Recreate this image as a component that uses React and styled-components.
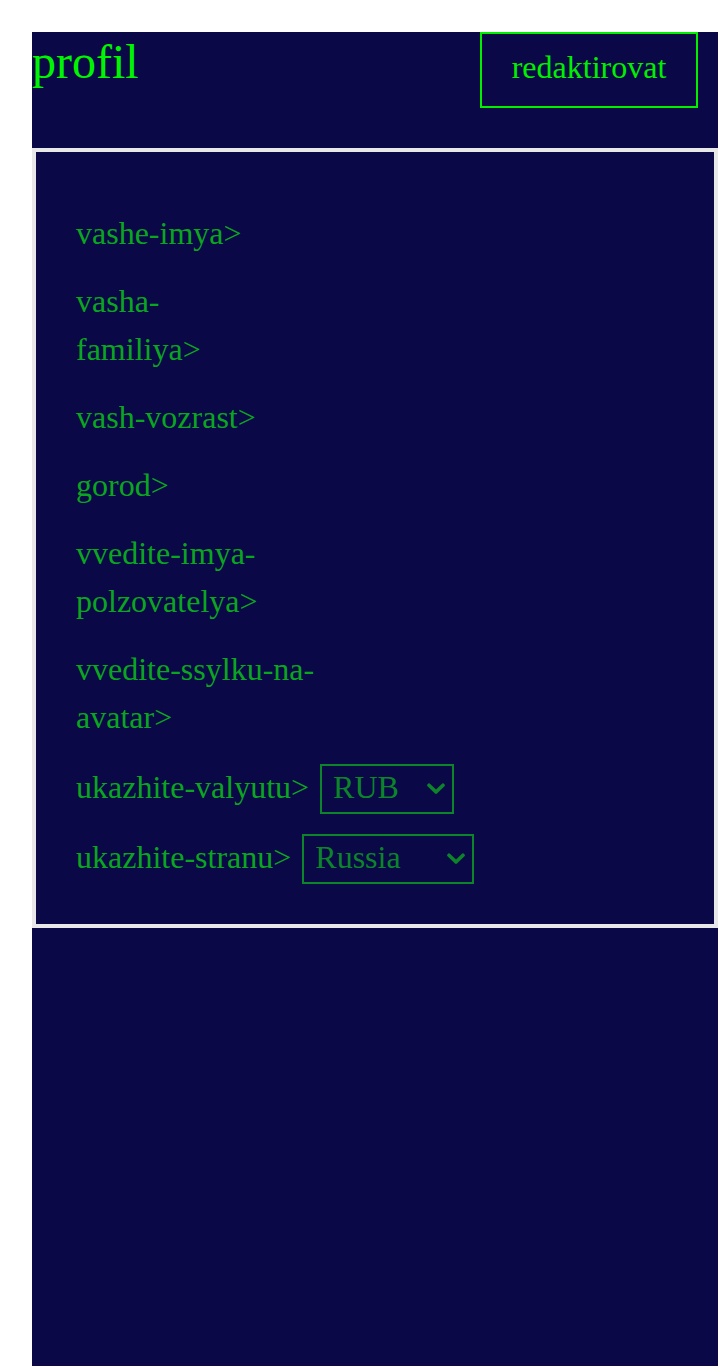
import React from "react";
import styled, { createGlobalStyle } from "styled-components";

const GlobalStyle = createGlobalStyle`
  html, body {
    margin: 0;
    padding: 0;
    background: #ffffff;
  }
  body {
    font-family: "Liberation Serif", "Times New Roman", serif;
  }
`;

const fields = [
  { lines: ["vashe-imya>"] },
  { lines: ["vasha-", "familiya>"] },
  { lines: ["vash-vozrast>"] },
  { lines: ["gorod>"] },
  { lines: ["vvedite-imya-", "polzovatelya>"] },
  { lines: ["vvedite-ssylku-na-", "avatar>"] },
];

const selects = [
  { label: "ukazhite-valyutu>", value: "RUB", options: ["RUB", "USD", "EUR"], width: 134 },
  { label: "ukazhite-stranu>", value: "Russia", options: ["Russia", "USA", "Germany"], width: 172 },
];

const Chevron = () => (
  <svg width="18" height="12" viewBox="0 0 18 12">
    <path
      d="M2 2.2 L9 9 L16 2.2"
      fill="none"
      stroke="#0c852a"
      strokeWidth="3.6"
      strokeLinecap="round"
      strokeLinejoin="round"
    />
  </svg>
);

const App = () => {
  return (
    <Page>
      <GlobalStyle />
      <Header>
        <Title>profil</Title>
        <EditButton>redaktirovat</EditButton>
      </Header>
      <Panel>
        {fields.map((f, idx) => (
          <FieldLabel key={idx}>
            {f.lines.map((ln, i) => (
              <React.Fragment key={i}>
                {i > 0 && <br />}
                {ln}
              </React.Fragment>
            ))}
          </FieldLabel>
        ))}
        <SelectGroup>
          {selects.map((s, idx) => (
            <SelectRow key={idx}>
              <RowLabel>{s.label}</RowLabel>
              <SelectWrap width={s.width}>
                <Select defaultValue={s.value}>
                  {s.options.map((o) => (
                    <option key={o}>{o}</option>
                  ))}
                </Select>
                <ChevronBox>
                  <Chevron />
                </ChevronBox>
              </SelectWrap>
            </SelectRow>
          ))}
        </SelectGroup>
      </Panel>
    </Page>
  );
};

export default App;

const Page = styled.div`
  margin: 32px 0 0 32px;
  min-height: calc(100vh - 32px);
  background: #0a0846;
`;

const Header = styled.div`
  display: flex;
  justify-content: space-between;
  align-items: flex-start;
  padding: 0 20px 40px 0;
`;

const Title = styled.h1`
  margin: 0;
  padding-top: 2px;
  font-size: 48px;
  font-weight: 400;
  line-height: 55px;
  color: #00f500;
`;

const EditButton = styled.button`
  font-family: "Liberation Serif", "Times New Roman", serif;
  font-size: 32px;
  color: #00f000;
  background: transparent;
  border: 2px solid #00f000;
  width: 218px;
  padding: 13px 0 19px;
  line-height: 40px;
  cursor: pointer;
`;

const Panel = styled.div`
  display: flex;
  flex-direction: column;
  align-items: flex-start;
  gap: 20px;
  border: 4px solid #e8e8e8;
  padding: 57px 40px 40px 40px;
`;

const FieldLabel = styled.p`
  margin: 0;
  font-size: 32px;
  line-height: 48px;
  color: #0aa620;
`;

const SelectGroup = styled.div`
  display: flex;
  flex-direction: column;
  gap: 20px;
  margin-top: 3px;
`;

const SelectRow = styled.div`
  display: flex;
  align-items: center;
  gap: 11px;
  height: 50px;
`;

const RowLabel = styled.span`
  font-size: 32px;
  line-height: 48px;
  padding-bottom: 4px;
  color: #0aa620;
`;

const SelectWrap = styled.div`
  position: relative;
  width: ${({ width }) => width}px;
  height: 50px;
`;

const Select = styled.select`
  appearance: none;
  -webkit-appearance: none;
  width: 100%;
  height: 100%;
  box-sizing: border-box;
  border: 2px solid #0c852a;
  border-radius: 0;
  background: transparent;
  color: #0c852a;
  font-family: "Liberation Serif", "Times New Roman", serif;
  font-size: 32px;
  padding: 0 0 4px 11px;
  outline: none;
`;

const ChevronBox = styled.span`
  position: absolute;
  right: 9px;
  top: 50%;
  transform: translateY(-50%);
  display: flex;
  pointer-events: none;
`;
